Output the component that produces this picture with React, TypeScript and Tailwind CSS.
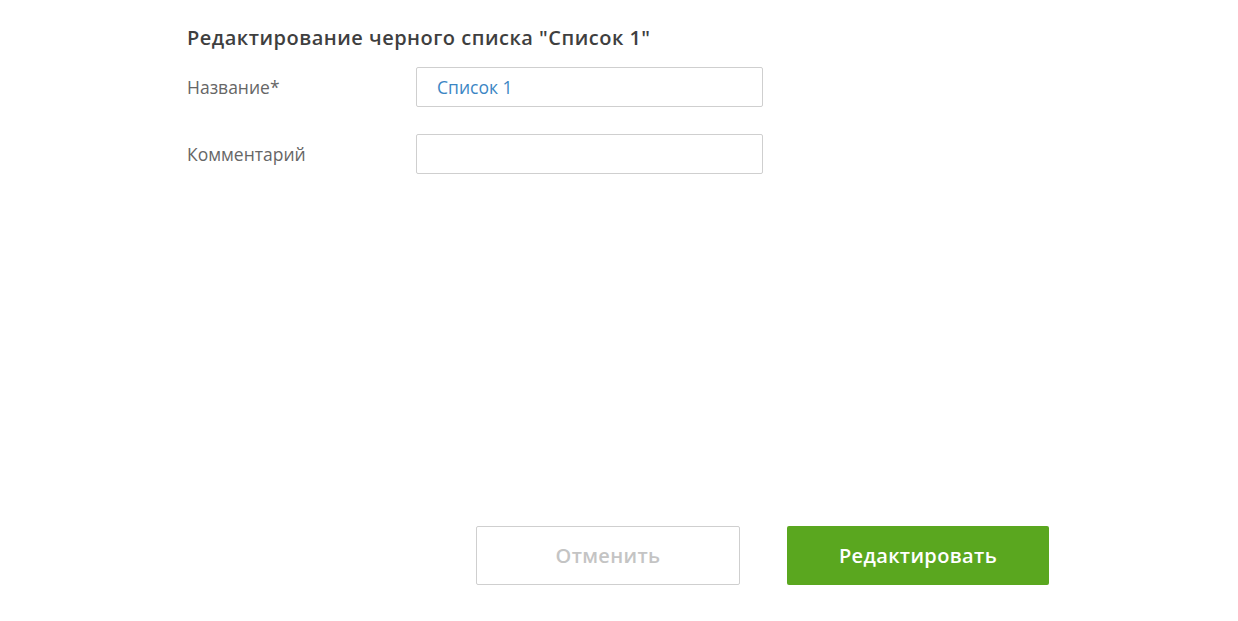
export default function App() {
  return (
    <div className="min-h-[621px] w-full bg-white font-['Open_Sans',sans-serif]">
      <div className="pl-[187px] pt-[25px]">
        <h1 className="text-[20px] leading-[26px] font-semibold tracking-[0.5px] text-[#3f3f3f]">
          Редактирование черного списка "Список 1"
        </h1>

        <div className="mt-[16px] flex flex-col gap-[27px]">
          <div className="flex items-center">
            <label className="w-[229px] text-[17.5px] text-[#666]">Название*</label>
            <div className="flex h-[40px] w-[347px] items-center rounded-[2px] border border-[#cfcfcf] px-[20px] text-[17.5px] text-[#3b86c4]">
              Список 1
            </div>
          </div>
          <div className="flex items-center">
            <label className="w-[229px] text-[17.5px] text-[#666]">Комментарий</label>
            <div className="h-[40px] w-[347px] rounded-[2px] border border-[#cfcfcf]" />
          </div>
        </div>

        <div className="ml-[289px] mt-[352px] flex gap-[47px]">
          <button className="h-[59px] w-[264px] rounded-[2px] border border-[#cfcfcf] bg-white text-[20px] font-semibold tracking-[0.35px] text-[#c4c4c4]">
            Отменить
          </button>
          <button className="h-[59px] w-[262px] rounded-[2px] bg-[#5aa71f] text-[20px] font-semibold tracking-[0.35px] text-white">
            Редактировать
          </button>
        </div>
      </div>
    </div>
  );
}
